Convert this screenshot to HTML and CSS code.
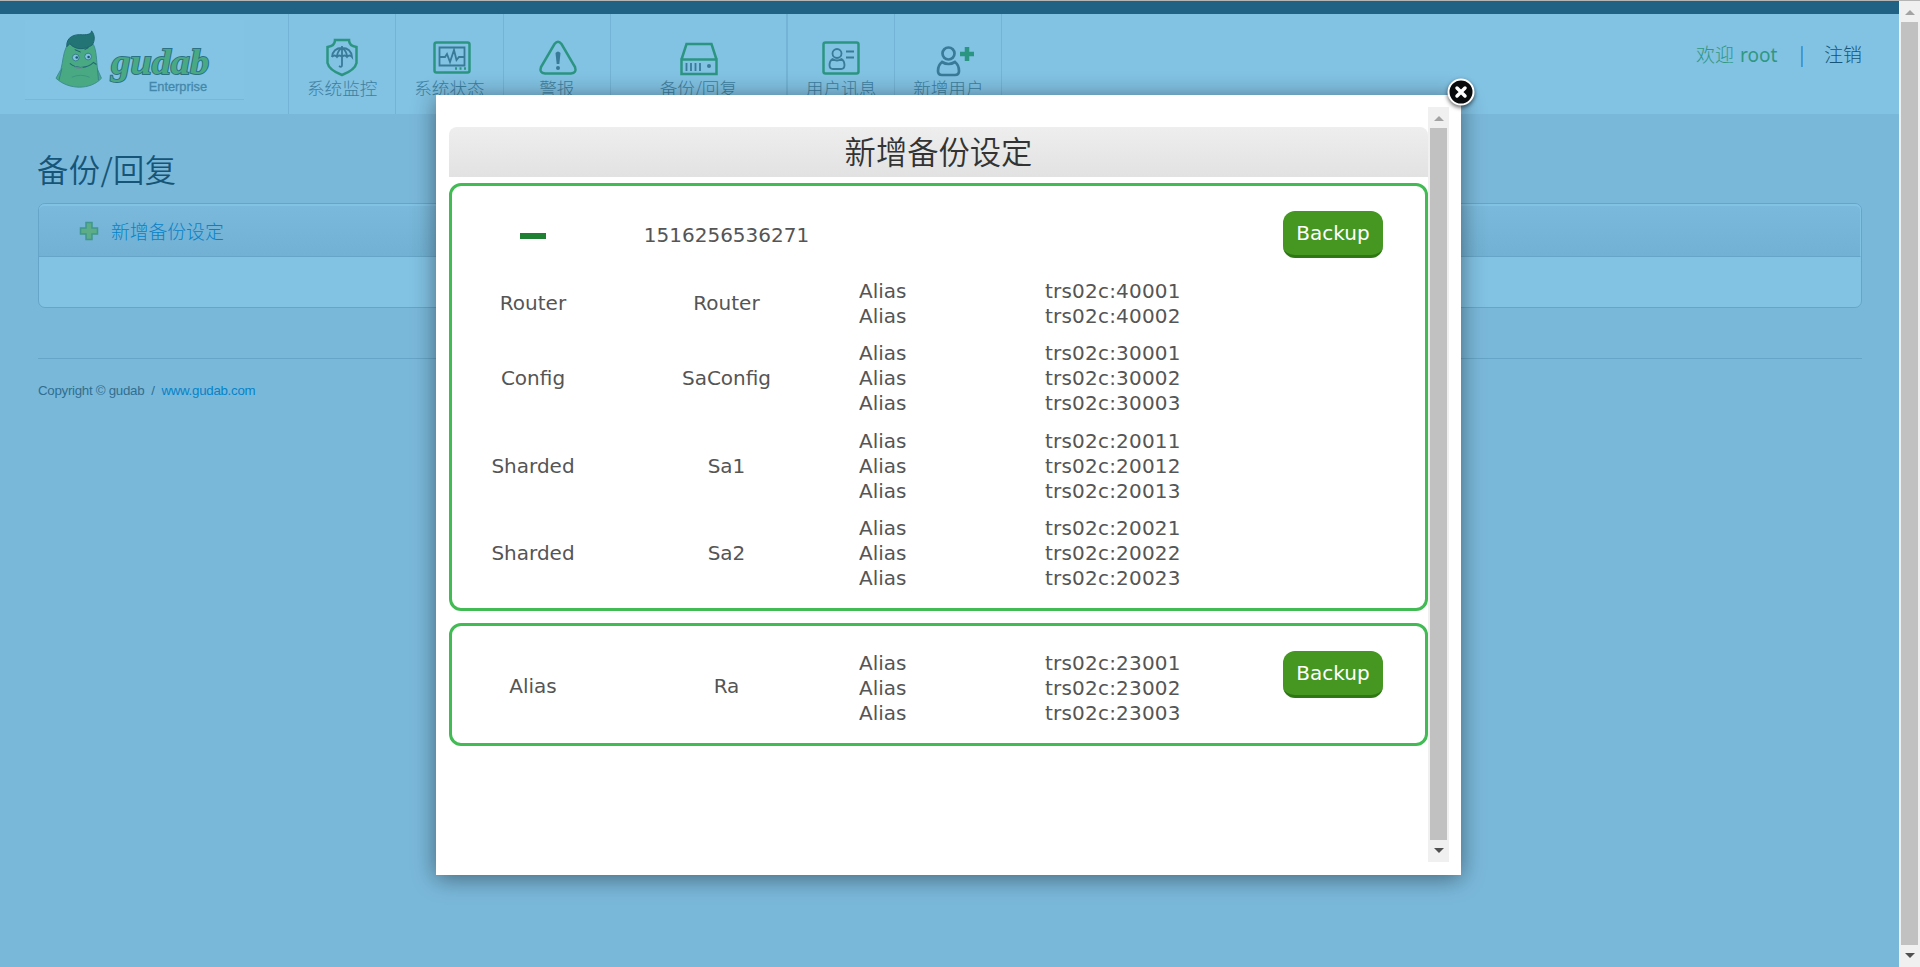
FILE: index.html
```html
<!DOCTYPE html>
<html lang="zh-CN">
<head>
<meta charset="utf-8">
<title>gudab Enterprise</title>
<link rel="stylesheet" href="styles.css">
</head>
<body>
<div class="shell">
  <div class="page">
    <div class="topbar"></div>
    <header class="header">
      <div class="logo">
        <svg width="219" height="80" viewBox="25 20 219 80">
          <path d="M66 46C62 54 62 63 60 70L55 79C68 91 90 91 101 79L97 70C96 61 96 51 93 45C85 39 72 40 66 46Z" fill="#49a983" stroke="#3c8f93" stroke-width="1"/>
          <path d="M61 69L58 81M97 69L98 81" stroke="#36818f" fill="none"/>
          <path d="M66 47C65 37 74 34 82 35C88 35 91 34 91 31C95 36 94 41 92 45C84 51 74 50 69 44Z" fill="#237575" stroke="#1d6470" stroke-width="1"/>
          <circle cx="75" cy="58" r="3.4" fill="#82c2e3" stroke="#2b7280" stroke-width=".8"/>
          <circle cx="87.500" cy="57" r="3.4" fill="#82c2e3" stroke="#2b7280" stroke-width=".8"/>
          <circle cx="76" cy="58" r="1.300" fill="#1a5872"/><circle cx="88" cy="57.500" r="1.300" fill="#1a5872"/>
          <path d="M74 50L80 52.500M84 50L88 48" stroke="#1a6070" stroke-width="1"/>
          <path d="M69 64C76 70 87 69 93 63L96 65" stroke="#216a77" stroke-width="1.100" fill="none"/>
          <path d="M74 67.500Q78 69.500 82 68" stroke="#727f9c" stroke-width="1.500" fill="none"/>
          <path d="M71 78Q80 74 89 78" stroke="#3b9582" fill="none"/>
          <text class="brand" x="111" y="75" textLength="99" lengthAdjust="spacingAndGlyphs">gudab</text>
          <text class="edition" x="149" y="91.500" textLength="59">Enterprise</text>
        </svg>
      </div>
      <nav class="nav">
        <a class="item">
          <svg class="icon" viewBox="0 0 40 40"><path class="g" d="M13 3H27Q27 9 34.500 10V26Q33 33 20 38Q7 33 5.500 26V10Q13 9 13 3Z"/><path class="b" d="M10 20Q11 11 20 11Q29 11 30 20Q27.500 17 25 20Q22.500 17 20 20Q17.500 17 15 20Q12.500 17 10 20M15 20Q15 14 20 11Q25 14 25 20M20 9V28Q20 31 17 29"/></svg>
          <span>系统监控</span></a>
        <a class="item status">
          <svg class="icon" viewBox="0 0 40 40"><rect class="g" x="2.500" y="5.500" width="35" height="30" rx="2"/><path class="b" d="M7.500 10.500H32.500V28.500H7.500ZM8 20H13L15 17L18 25L22 13L24.500 23L27 20H32"/><path class="g" d="M23 31.500h2M27.500 31.500h2M32 31.500h2"/></svg>
          <span>系统状态</span></a>
        <a class="item alert">
          <svg class="icon" viewBox="0 0 40 40"><path class="g" d="M16.500 7Q20 2.500 23.500 7L37 30Q39 36 33 36.500H7Q1 36 3 30Z"/><path d="M17.500 16Q20 13 22.500 16L21.300 27H18.700Z" fill="#387a98"/><circle cx="20" cy="31" r="2" fill="#387a98"/></svg>
          <span>警报</span></a>
        <a class="item wide">
          <svg class="icon" viewBox="0 0 40 40"><path class="g" d="M2.500 22.500H37.500V37H2.500ZM2.500 22.500L7.500 7H32.500L37.500 22.500"/><path class="b" d="M7.500 26v8M12 26v8M16.500 26v8M21 26v8"/><circle cx="30" cy="29" r="2" fill="#387a98"/></svg>
          <span>备份/回复</span></a>
        <a class="item">
          <svg class="icon" viewBox="0 0 40 40"><rect class="g" x="2.500" y="5.500" width="35" height="31" rx="2"/><circle class="b" cx="16" cy="16.500" r="4.500"/><path class="b" d="M11.500 22Q8.500 24 8.500 28Q8.500 32 12 32H20Q23.500 32 23.500 28Q23.500 24 20.500 22Q16 25 11.500 22ZM25 14.500h8M25 20.500h8"/></svg>
          <span>用户讯息</span></a>
        <a class="item add">
          <svg class="icon" viewBox="0 0 40 40"><circle class="b thick" cx="13.500" cy="16.500" r="6"/><path class="b thick" d="M7 25Q3 28 3 34Q3 38 7 38H20Q24 38 24 34Q24 28 20 25Q13.500 29 7 25Z"/><path d="M32 10v14M25 17h14" stroke="#2c9582" stroke-width="4.500"/></svg>
          <span>新增用户</span></a>
      </nav>
      <div class="user"><span class="hello">欢迎 <b>root</b></span><span class="bar">|</span><a class="logout">注销</a></div>
    </header>
    <main class="content">
      <h1 class="title">备份/回复</h1>
      <section class="panel">
        <div class="panel-head">
          <svg class="plus" viewBox="0 0 20 20"><path d="M7 1.500H13V7H18.500V13H13V18.500H7V13H1.500V7H7Z" fill="#5bac87" stroke="#3f978d" stroke-width="1.500"/></svg>
          <a>新增备份设定</a>
        </div>
      </section>
      <footer class="footer">Copyright © gudab &nbsp;/&nbsp; <a>www.gudab.com</a></footer>
    </main>
  </div>
  <div class="scroll page-scroll"><i class="up"></i><b class="thumb"></b><i class="down"></i></div>
</div>

<div class="modal">
  <div class="modal-body">
    <h2 class="modal-title">新增备份设定</h2>
    <section class="box">
      <div class="row head"><span><i class="minus"></i></span><span>1516256536271</span><span></span><span></span><button class="btn">Backup</button></div>
      <div class="row"><span>Router</span><span>Router</span><p>Alias<br>Alias</p><p class="host">trs02c:40001<br>trs02c:40002</p></div>
      <div class="row"><span>Config</span><span>SaConfig</span><p>Alias<br>Alias<br>Alias</p><p class="host">trs02c:30001<br>trs02c:30002<br>trs02c:30003</p></div>
      <div class="row"><span>Sharded</span><span>Sa1</span><p>Alias<br>Alias<br>Alias</p><p class="host">trs02c:20011<br>trs02c:20012<br>trs02c:20013</p></div>
      <div class="row"><span>Sharded</span><span>Sa2</span><p>Alias<br>Alias<br>Alias</p><p class="host">trs02c:20021<br>trs02c:20022<br>trs02c:20023</p></div>
    </section>
    <section class="box single">
      <div class="row"><span>Alias</span><span>Ra</span><p>Alias<br>Alias<br>Alias</p><p class="host">trs02c:23001<br>trs02c:23002<br>trs02c:23003</p><button class="btn">Backup</button></div>
    </section>
  </div>
  <div class="scroll"><i class="up"></i><b class="thumb"></b><i class="down"></i></div>
  <svg class="close" viewBox="0 0 30 30"><circle cx="15" cy="15" r="12.500" fill="#080a0c" stroke="#fff" stroke-width="2"/><path d="M11 11L19 19M19 11L11 19" stroke="#fff" stroke-width="3.500" stroke-linecap="round"/></svg>
</div>
</body>
</html>
```
FILE: styles.css
```css
* { box-sizing: border-box; }
body {
  margin: 0;
  height: 967px;
  overflow: hidden;
  background: #7ab8da;
  font-family: "DejaVu Sans", "Noto Sans CJK SC", sans-serif;
  color: #555;
}
h1, h2, p { margin: 0; font-weight: normal; }
.shell { display: flex; height: 967px; border-top: 1px solid #b5b5b5; }
.page { flex: 1; }
.topbar { height: 13px; background: #206283; }

.header {
  display: flex;
  height: 100px;
  background: #82c2e3;
}
.logo {
  width: 288px;
  padding: 6px 0 0 25px;
}
.logo svg { display: block; border-bottom: 1px solid #79b7d8; background: #83c3e3; }
.brand {
  font: italic bold 37px "Liberation Serif", serif;
  fill: #49a983;
  stroke: #2a7184;
  stroke-width: 2px;
  paint-order: stroke;
}
.edition { font: 13px "Liberation Sans", sans-serif; fill: #4388ab; stroke: #4388ab; stroke-width: .3px; }
.nav { display: flex; border-left: 1px solid #74b3d5; }
.item {
  display: flex;
  flex-direction: column;
  align-items: center;
  width: 107.3px;
  padding-top: 23px;
  border-right: 1px solid #74b3d5;
  font: 300 17.6px/22px "Noto Sans CJK SC", sans-serif;
  color: #3d7fa1;
}
.item.wide { width: 177px; border-right-width: 2px; }
.icon { width: 40px; height: 40px; flex: none; }
.status .icon { margin-left: 6px; }
.alert .icon { margin-left: 3px; }
.wide .icon { margin-left: 2px; }
.add .icon { margin-left: 13px; }
.g { fill: none; stroke: #2c9582; stroke-width: 2.5; }
.b { fill: none; stroke: #387a98; stroke-width: 1.8; }
.thick { stroke-width: 2.7; }
.user {
  display: flex;
  margin-left: auto;
  padding: 27px 37px 0 0;
  font-family: "Noto Sans CJK SC", sans-serif;
  font-size: 18.9px;
  font-weight: 300;
  line-height: 26px;
}
.hello { color: #2f9880; }
.hello b { font: 19px/26px "Noto Sans", sans-serif; margin-left: 2px; }
.bar { margin: 0 20px 0 22px; color: #195ba5; }
.logout { color: #165577; }

.content { padding: 31px 37px 0 38px; }
.title {
  margin-left: -1px;
  font: 350 31.3px/48px "Noto Sans CJK SC", sans-serif;
  letter-spacing: .4px;
  color: #165577;
}
.panel {
  height: 105px;
  margin-top: 10px;
  border: 1px solid #66a5c7;
  border-radius: 7px;
  background: #82c2e3;
}
.panel-head {
  display: flex;
  align-items: center;
  gap: 12px;
  height: 53px;
  padding-left: 40px;
  border: 1px solid #82c2e3;
  border-width: 2px 1px 0 0;
  border-bottom: 1px solid #66a5c7;
  border-radius: 6px 6px 0 0;
  background: linear-gradient(#7ab9db, #72b1d3);
  font: 300 18.8px/24px "Noto Sans CJK SC", sans-serif;
  color: #0683c8;
}
.panel-head a { margin-top: -1px; }
.plus { width: 20px; height: 20px; }
.footer {
  margin-top: 50px;
  padding-top: 22px;
  border-top: 1px solid #66a5c7;
  font: 13.3px/20px "Liberation Sans", sans-serif;
  letter-spacing: -.28px;
  color: #306f90;
}
.footer a { color: #0683c8; }

.scroll {
  display: flex;
  flex-direction: column;
  align-items: center;
  width: 21px;
  background: #f0f0f0;
}
.thumb { flex: 1; width: 17px; background: #c1c1c1; }
.up, .down { flex: none; height: 21px; width: 10px; }
.up::after, .down::after {
  content: "";
  display: block;
  margin-top: 9px;
  border: solid transparent;
  border-width: 0 5px 5px;
  border-bottom-color: #a3a3a3;
  width: 0;
}
.down { height: 22px; }
.down::after {
  margin-top: 8px;
  border-width: 5px 5px 0;
  border-top-color: #505050;
}

/* Dialog floats over the page */
.modal {
  position: absolute;
  left: 436px;
  top: 95px;
  display: flex;
  width: 1025px;
  height: 780px;
  padding: 12px 12px 13px 13px;
  background: #fff;
  box-shadow: 0 3px 22px rgba(0, 0, 0, .45);
}
.modal-body { width: 979px; padding-top: 20px; }
.modal-title {
  height: 50px;
  margin-bottom: 6px;
  border-radius: 8px 8px 0 0;
  background: linear-gradient(#eee, #e2e2e2);
  font: 350 31.3px/48px "Noto Sans CJK SC", sans-serif;
  text-align: center;
  color: #333;
}
.box {
  height: 428px;
  margin-bottom: 12px;
  padding-top: 12.25px;
  border: 3px solid #42bb55;
  border-radius: 12px;
}
.box.single { height: 123px; padding-top: 18.25px; }
.row {
  display: grid;
  grid-template-columns: 162px 225px 186px 258px 100px;
  align-items: center;
  padding: 6.25px 0;
  font-size: 20px;
  line-height: 25px;
}
.row > span { text-align: center; }
.single .row > span { margin-top: -4px; }
.row > p { padding-left: 20px; }
.host { letter-spacing: .2px; }
.head { height: 74px; }
.minus { display: block; width: 26px; height: 6px; margin: 1px auto 0; background: #1f7f32; }
.btn {
  align-self: start;
  height: 47px;
  padding: 0;
  border: 0;
  border-bottom: 3px solid #2f7714;
  border-radius: 12px;
  background: #469722;
  color: #fff;
  font: 20px "DejaVu Sans", sans-serif;
}
.head .btn { margin-top: 6px; }
.close {
  position: absolute;
  top: -18px;
  right: -15px;
  width: 30px;
  height: 30px;
  filter: drop-shadow(0 2px 2px rgba(0, 0, 0, .6));
}
```
